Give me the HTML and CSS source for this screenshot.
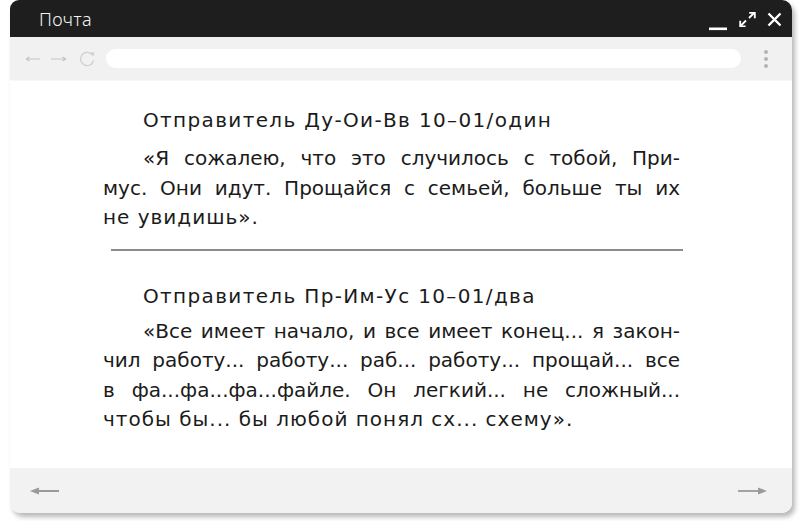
FILE: index.html
```html
<!DOCTYPE html>
<html lang="ru">
<head>
<meta charset="utf-8">
<title>Почта</title>
<link rel="stylesheet" href="styles.css">
</head>
<body>
<div class="window">
  <header class="titlebar">
    <span class="title">Почта</span>
    <div class="controls">
      <svg class="ic-min" width="18" height="4" viewBox="0 0 18 4"><rect x="0" y="0.5" width="18" height="2.6" fill="#fff"/></svg>
      <svg class="ic-max" width="17" height="15" viewBox="0 0 17 15"><path d="M2 13.5 L7 8.5 M10 6 L15 1" stroke="#fff" stroke-width="1.8" fill="none"/><path d="M1.2 8.8 V14.3 H6.6" stroke="#fff" stroke-width="1.8" fill="none"/><path d="M10.2 0.8 H15.8 V6.2" stroke="#fff" stroke-width="1.8" fill="none"/></svg>
      <svg class="ic-close" width="15" height="15" viewBox="0 0 15 15"><path d="M1.5 1.5 L13.5 13.5 M13.5 1.5 L1.5 13.5" stroke="#fff" stroke-width="2.4" fill="none"/></svg>
    </div>
  </header>
  <nav class="toolbar">
    <svg class="tb-arrow" width="16" height="8" viewBox="0 0 16 8"><path d="M1 4 H15 M1 4 L4.5 2 M1 4 L4.5 6" stroke="#c6c6c6" stroke-width="1.2" fill="none"/></svg>
    <svg class="tb-arrow" width="17" height="8" viewBox="0 0 17 8"><path d="M1 4 H16 M16 4 L12.5 2 M16 4 L12.5 6" stroke="#c6c6c6" stroke-width="1.2" fill="none"/></svg>
    <svg class="tb-reload" width="17" height="16" viewBox="0 0 17 16"><path d="M13.6 4.2 A6.6 6.6 0 1 0 14.6 9.5" stroke="#cfcfcf" stroke-width="1.3" fill="none"/><path d="M11.2 1.2 L15.4 1.6 L14.4 5.6 Z" fill="#cfcfcf"/></svg>
    <div class="address"></div>
    <div class="dots"><i></i><i></i><i></i></div>
  </nav>
  <main class="content">
    <section class="message">
      <h2 class="sender">Отправитель Ду-Ои-Вв 10–01/один</h2>
      <p class="body">
        <span class="ln first">«Я сожалею, что это случилось с тобой, При-</span>
        <span class="ln">мус. Они идут. Прощайся с семьей, больше ты их</span>
        <span class="ln last">не увидишь».</span>
      </p>
    </section>
    <hr class="rule">
    <section class="message second">
      <h2 class="sender">Отправитель Пр-Им-Ус 10–01/два</h2>
      <p class="body">
        <span class="ln first">«Все имеет начало, и все имеет конец... я закон-</span>
        <span class="ln">чил работу... работу... раб... работу... прощай... все</span>
        <span class="ln">в фа...фа...фа...файле. Он легкий... не сложный...</span>
        <span class="ln last">чтобы бы... бы любой понял сх... схему».</span>
      </p>
    </section>
  </main>
  <footer class="footbar">
    <svg width="30" height="10" viewBox="0 0 30 10"><path d="M7 5 H29" stroke="#9a9a9a" stroke-width="1.8"/><path d="M0 5 L9 1.5 L9 8.5 Z" fill="#9a9a9a"/></svg>
    <svg width="30" height="10" viewBox="0 0 30 10"><path d="M1 5 H23" stroke="#9a9a9a" stroke-width="1.8"/><path d="M30 5 L21 1.5 L21 8.5 Z" fill="#9a9a9a"/></svg>
  </footer>
</div>
</body>
</html>
```
FILE: styles.css
```css
html, body {
  margin: 0;
  padding: 0;
  background: #ffffff;
}
body {
  width: 800px;
  height: 521px;
  overflow: hidden;
  font-family: "DejaVu Sans", "Noto Sans", sans-serif;
}
.window {
  margin-left: 10px;
  width: 782px;
  height: 513px;
  display: flex;
  flex-direction: column;
  border-radius: 9px 10px 10px 10px;
  overflow: hidden;
  box-shadow: 3px 4px 5px rgba(0, 0, 0, 0.28);
  background: #fff;
}
.titlebar {
  height: 37px;
  flex: none;
  background: #1e1e1e;
  display: flex;
  align-items: center;
  justify-content: space-between;
  box-sizing: border-box;
  padding: 0 10px 0 29px;
}
.title {
  color: #f4f4f4;
  font-family: "Noto Sans", sans-serif;
  font-size: 18px;
  font-weight: 300;
  letter-spacing: 0.4px;
  padding-top: 1px;
}
.controls {
  display: flex;
  align-items: center;
}
.ic-min { margin-top: 20px; margin-right: 12px; }
.ic-max { margin-top: 2px; margin-right: 11px; }
.ic-close { margin-top: 2px; }
.toolbar {
  height: 44px;
  flex: none;
  background: #f1f1f1;
  border-bottom: 1px solid #f8f8f8;
  box-sizing: border-box;
  display: flex;
  align-items: center;
  padding: 0 0 0 15px;
}
.tb-arrow { margin-right: 9px; margin-top: 1px; }
.tb-reload { margin-left: 3px; margin-right: 10px; }
.address {
  width: 635px;
  height: 19px;
  background: #fff;
  border-radius: 10px;
}
.dots {
  display: flex;
  flex-direction: column;
  gap: 3px;
  margin-left: 23px;
  margin-top: 1px;
}
.dots i {
  display: block;
  width: 4px;
  height: 4px;
  border-radius: 50%;
  background: #b4b4b4;
}
.content {
  flex: 1;
  background: #fff;
  padding: 25px 0 0 93px;
  color: #1b1b1b;
}
.message {
  width: 577px;
}
.sender {
  margin: 0;
  font-weight: 400;
  font-size: 20px;
  line-height: 29px;
  letter-spacing: 1.35px;
  padding-left: 40px;
}
.body {
  margin: 9px 0 0 0;
  font-size: 20px;
  line-height: 29.5px;
}
.ln {
  display: block;
  text-align: justify;
  text-align-last: justify;
}
.ln.first { padding-left: 40px; }
.ln.last { text-align-last: left; letter-spacing: 1px; }
.rule {
  margin: 16px 0 0 8px;
  width: 572px;
  height: 2px;
  border: 0;
  background: #8c8c8c;
}
.second { margin-top: 31px; }
.second .body { margin-top: 6px; }
.footbar {
  height: 45px;
  flex: none;
  background: #f2f2f2;
  display: flex;
  align-items: center;
  justify-content: space-between;
  padding: 0 25px 0 20px;
}
```
